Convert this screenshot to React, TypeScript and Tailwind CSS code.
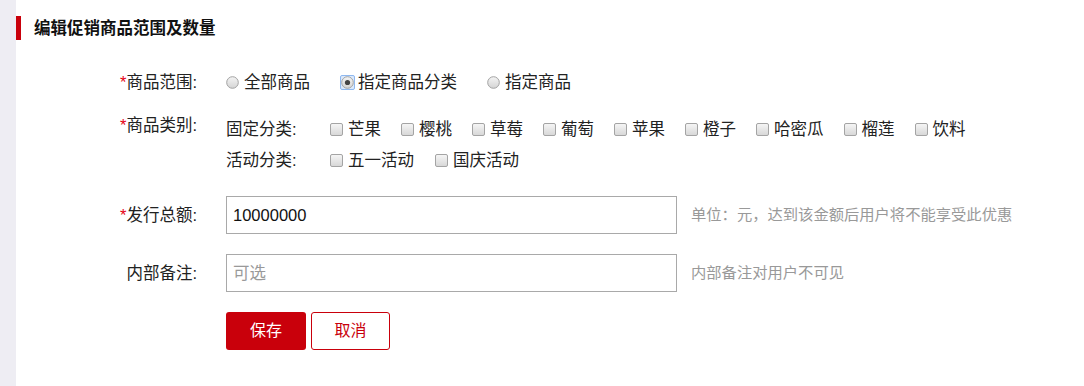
import React from "react";

const Radio = ({ checked }: { checked?: boolean }) => (
  <svg width="15" height="15" viewBox="0 0 15 15" className="shrink-0">
    <defs>
      <linearGradient id={checked ? "rg1" : "rg0"} x1="0" y1="0" x2="0" y2="1">
        <stop offset="0" stopColor="#f4f4f4" />
        <stop offset="1" stopColor="#d4d4d4" />
      </linearGradient>
    </defs>
    {checked && <rect x="0.5" y="0.5" width="14" height="14" rx="1.5" fill="#dbe9fb" stroke="#8fb8ef" />}
    <circle cx="7.5" cy="7.5" r="5.8" fill={`url(#${checked ? "rg1" : "rg0"})`} stroke="#a2a2a2" strokeWidth="1" />
    {checked && <circle cx="7.5" cy="7.5" r="2.6" fill="#444" />}
  </svg>
);

const Checkbox = () => (
  <span className="inline-block h-[13px] w-[13px] shrink-0 rounded-[2px] border border-[#a4a4a4] bg-gradient-to-b from-[#f5f5f5] to-[#d8d8d8]" />
);

const Label = ({ text, required }: { text: string; required?: boolean }) => (
  <div className="w-[181px] shrink-0 text-right leading-[22px]">
    {required && <span className="text-[#e60012]">*</span>}
    {text}
  </div>
);

export default function App() {
  const fixed = ["芒果", "樱桃", "草莓", "葡萄", "苹果", "橙子", "哈密瓜", "榴莲", "饮料"];
  const act = ["五一活动", "国庆活动"];
  return (
    <div
      className="flex min-h-[386px] bg-white text-[16.5px] text-[#222]"
      style={{ fontFamily: '"Liberation Sans", "Noto Sans CJK SC", sans-serif' }}
    >
      <div className="w-[16px] shrink-0 bg-[#eeedf3]" />
      <div className="flex-1">
        <div className="mt-[16px] flex h-[24px] items-center border-l-[5px] border-[#c9000b] pl-[13px] text-[16.5px] font-bold text-[#111]">
          编辑促销商品范围及数量
        </div>

        <div className="mt-[31px] flex h-[22px] items-center">
          <Label text="商品范围:" required />
          <div className="ml-[28px] flex items-center">
            <label className="mr-[30px] flex items-center gap-[4px]">
              <Radio />
              <span>全部商品</span>
            </label>
            <label className="mr-[29px] flex items-center gap-[3px]">
              <Radio checked />
              <span>指定商品分类</span>
            </label>
            <label className="flex items-center gap-[4px]">
              <Radio />
              <span>指定商品</span>
            </label>
          </div>
        </div>

        <div className="mt-[21px] flex items-start">
          <Label text="商品类别:" required />
          <div className="ml-[29px] flex flex-col">
            <div className="flex h-[31px] items-center">
              <span className="w-[104px]">固定分类:</span>
              {fixed.map((f) => (
                <label key={f} className="mr-[20px] flex items-center gap-[5px]">
                  <Checkbox />
                  <span>{f}</span>
                </label>
              ))}
            </div>
            <div className="flex h-[31px] items-center">
              <span className="w-[104px]">活动分类:</span>
              {act.map((f) => (
                <label key={f} className="mr-[21px] flex items-center gap-[5px]">
                  <Checkbox />
                  <span>{f}</span>
                </label>
              ))}
            </div>
          </div>
        </div>

        <div className="mt-[20px] flex items-center">
          <Label text="发行总额:" required />
          <input
            readOnly
            value="10000000"
            className="ml-[29px] h-[38px] w-[451px] border border-[#a9a9a9] px-[6px] text-[16.5px] text-[#111] outline-none"
          />
          <span className="ml-[14px] text-[15.3px] text-[#999]">单位：元，达到该金额后用户将不能享受此优惠</span>
        </div>

        <div className="mt-[20px] flex items-center">
          <Label text="内部备注:" />
          <input
            readOnly
            placeholder="可选"
            className="ml-[29px] h-[38px] w-[451px] border border-[#a9a9a9] px-[6px] text-[16.5px] text-[#111] outline-none placeholder:text-[#999]"
          />
          <span className="ml-[14px] text-[15.3px] text-[#999]">内部备注对用户不可见</span>
        </div>

        <div className="mt-[20px] flex items-center gap-[5px] pl-[210px]">
          <button className="h-[38px] w-[80px] rounded-[3px] bg-[#c9000b] text-[16px] text-white">保存</button>
          <button className="h-[38px] w-[79px] rounded-[3px] border border-[#c9000b] bg-white text-[16px] text-[#c9000b]">
            取消
          </button>
        </div>
      </div>
    </div>
  );
}
